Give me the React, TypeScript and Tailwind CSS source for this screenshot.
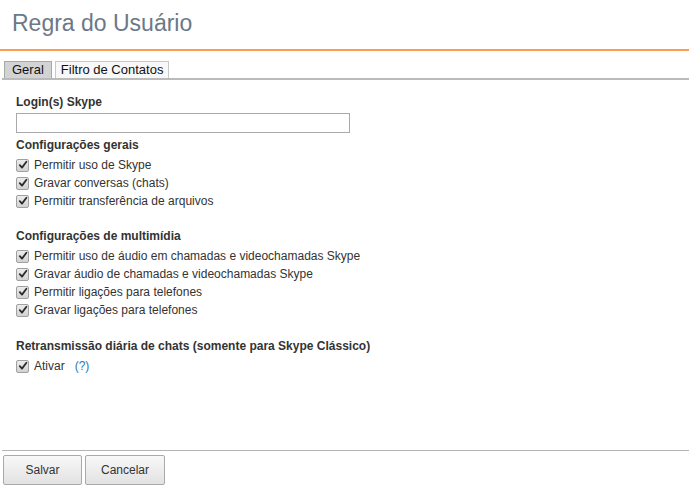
import React from "react";

function Check({ label, extra }: { label: string; extra?: React.ReactNode }) {
  return (
    <div className="flex items-center h-[18px]">
      <span className="w-[13px] h-[13px] border border-[#a0a0a0] rounded-[2px] bg-gradient-to-b from-[#ececec] to-[#d2d2d2] flex items-center justify-center mr-[5px] shrink-0">
        <svg width="10" height="10" viewBox="0 0 10 10">
          <path d="M1.8 5.2 L4 7.6 L8.4 1.8" fill="none" stroke="#2b2b2b" strokeWidth="1.8" strokeLinecap="round" strokeLinejoin="round" />
        </svg>
      </span>
      <span className="text-[12px] text-[#333]">{label}</span>
      {extra}
    </div>
  );
}

export default function App() {
  return (
    <div className="w-[689px] h-[492px] bg-white relative font-['Liberation_Sans',Arial,sans-serif] overflow-hidden">
      <div className="h-[49px] pl-[12px] pt-[9px]">
        <h1 className="text-[23px] leading-[29px] text-[#6b7887] font-normal">Regra do Usuário</h1>
      </div>
      <div className="h-[2px] bg-[#f89e4d]" />
      <div className="flex pl-[4px] pt-[10px] gap-[3px] items-end">
        <div className="h-[17px] px-[7px] bg-[#d3d3d3] border border-[#a8a8a8] border-b-0 text-[13px] leading-[16px] text-[#111]">Geral</div>
        <div className="h-[17px] px-[5px] bg-[#f8f8f8] border border-[#c8c8c8] border-b-0 text-[13px] leading-[16px] text-[#111]">Filtro de Contatos</div>
      </div>
      <div className="ml-[2px] h-[2px] bg-[#bababa]" />
      <div className="pl-[16px] pt-[14px]">
        <div className="text-[12px] font-bold text-[#333] leading-[16px]">Login(s) Skype</div>
        <div className="mt-[3px] w-[334px] h-[20px] border border-[#a9a9a9] bg-white" />
        <div className="mt-[4px] text-[12px] font-bold text-[#333] leading-[16px]">Configurações gerais</div>
        <div className="mt-[3px]">
          <Check label="Permitir uso de Skype" />
          <Check label="Gravar conversas (chats)" />
          <Check label="Permitir transferência de arquivos" />
        </div>
        <div className="mt-[18px] text-[12px] font-bold text-[#333] leading-[16px]">Configurações de multimídia</div>
        <div className="mt-[3px]">
          <Check label="Permitir uso de áudio em chamadas e videochamadas Skype" />
          <Check label="Gravar áudio de chamadas e videochamadas Skype" />
          <Check label="Permitir ligações para telefones" />
          <Check label="Gravar ligações para telefones" />
        </div>
        <div className="mt-[19px] text-[12px] font-bold text-[#333] leading-[16px]">Retransmissão diária de chats (somente para Skype Clássico)</div>
        <div className="mt-[3px]">
          <Check label="Ativar" extra={<span className="ml-[10px] text-[12px] text-[#2a7ab8]">(?)</span>} />
        </div>
      </div>
      <div className="absolute left-0 right-0 top-[450px]">
        <div className="ml-[2px] h-px bg-[#b5b5b5]" />
        <div className="flex gap-[3px] pl-[3px] pt-[4px]">
          <button className="w-[79px] h-[30px] border border-[#a9a9a9] rounded-[2px] bg-gradient-to-b from-[#f8f8f8] to-[#e2e2e2] text-[12px] text-[#333]">Salvar</button>
          <button className="w-[80px] h-[30px] border border-[#a9a9a9] rounded-[2px] bg-gradient-to-b from-[#f8f8f8] to-[#e2e2e2] text-[12px] text-[#333]">Cancelar</button>
        </div>
      </div>
    </div>
  );
}
